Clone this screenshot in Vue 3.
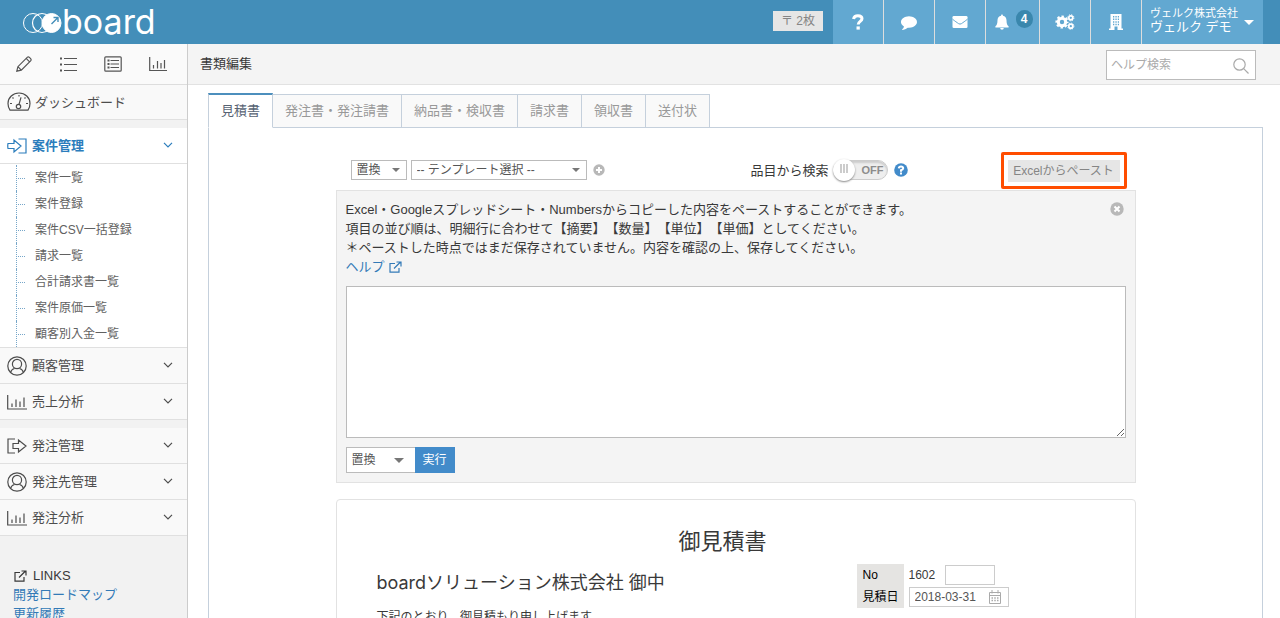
<script setup>
import { ref } from 'vue'

const subItems = ['案件一覧', '案件登録', '案件CSV一括登録', '請求一覧', '合計請求書一覧', '案件原価一覧', '顧客別入金一覧']
const groups = [
  [{ label: '顧客管理', icon: 'user' }, { label: '売上分析', icon: 'chart' }],
  [{ label: '発注管理', icon: 'out' }, { label: '発注先管理', icon: 'user' }, { label: '発注分析', icon: 'chart' }]
]
const tabs = ['見積書', '発注書・発注請書', '納品書・検収書', '請求書', '領収書', '送付状']
const activeTab = ref(0)
const searchItems = ref(false)
const pasted = ref('')
const serial = ref('')
const estimateDate = ref('2018-03-31')
</script>

<template>
  <div class="app">
    <header class="topbar">
      <a href="#" class="brand" aria-label="board">
        <svg width="40" height="26" viewBox="0 0 40 26" fill="none" stroke="#fff" aria-hidden="true">
          <circle cx="11" cy="14" r="9.500" />
          <circle cx="20" cy="14" r="9.500" stroke-width="1.200" />
          <circle cx="29.500" cy="14" r="9.500" fill="#fff" />
          <path d="M29.500 15l6-6M31.500 8.500H36V13" stroke="#438eb9" stroke-width="1.400" />
        </svg>
        <span>board</span>
      </a>
      <span class="stamp">〒 2枚</span>
      <nav class="topnav">
        <button type="button" class="first" aria-label="ヘルプ">
          <svg width="12" height="16" viewBox="0 0 12 16" fill="none" stroke="#fff" stroke-width="3"><path d="M1.500 5C2 2.800 3.700 1.800 5.900 1.800c2.400 0 4.100 1.100 4.100 3 0 2.700-3.800 2.500-3.800 5.700" /><path d="M4.500 14h3.300" stroke-width="3.200" /></svg>
        </button>
        <button type="button" aria-label="コメント">
          <svg width="16" height="16" viewBox="0 0 1792 1792" fill="#fff"><path d="M1792 896q0 174-120 321.500t-326 233-450 85.500q-70 0-145-8-198 175-460 242-49 14-114 22-17 2-30.500-9t-17.500-29q-3-8 6-31l17-25q7-8 31-34.500t34.500-38 31-39.500 32.500-51 27-59 26-76q-157-89-247.500-220t-90.500-281q0-130 71-248.500t191-204.500 286-136.500 348-50.500 348 50.500 286 136.500 191 204.500 71 248.500z" /></svg>
        </button>
        <button type="button" aria-label="メール">
          <svg width="16" height="16" viewBox="0 0 16 16"><rect x="0.500" y="2" width="15" height="12" rx="1.300" fill="#fff" /><path d="M.5 5.200C3 7.200 5 8.500 6.500 9.600q1.500 1 3 0C11 8.500 13 7.200 15.500 5.200" fill="none" stroke="#62a8d1" stroke-width="1" /></svg>
        </button>
        <button type="button" class="bell" aria-label="通知 4">
          <svg width="14" height="16" viewBox="0 0 14 16" fill="#fff"><path d="M7 .5c.6 0 1 .5.900 1.200 2.300.5 3.600 2.300 3.600 4.500 0 3.600.8 5 2.100 6.100v1.200H.4v-1.200C1.700 11.200 2.500 9.800 2.500 6.200c0-2.200 1.300-4 3.600-4.500C6 1 6.400.5 7 .5zM5.200 14h3.600a1.800 1.800 0 0 1-3.600 0z" /></svg>
          <span class="count">4</span>
        </button>
        <button type="button" aria-label="設定">
          <svg width="20" height="16" viewBox="0 0 20 16" fill="none" stroke="#fff"><circle cx="7" cy="8" r="3.700" stroke-width="3" /><circle cx="7" cy="8" r="5.600" stroke-width="2" stroke-dasharray="2.400 2" stroke-dashoffset="1.200" /><circle cx="15.800" cy="3.800" r="2" stroke-width="1.700" /><circle cx="15.800" cy="3.800" r="3.100" stroke-width="1" stroke-dasharray="1.300 1.130" /><circle cx="15.800" cy="12.200" r="2" stroke-width="1.700" /><circle cx="15.800" cy="12.200" r="3.100" stroke-width="1" stroke-dasharray="1.300 1.130" /></svg>
        </button>
        <button type="button" aria-label="会社">
          <svg width="14" height="16" viewBox="0 0 14 16" fill="#fff"><path fill-rule="evenodd" d="M1.500 0h11v14.500H14V16H8.500v-3.500h-3V16H0v-1.500h1.500zM4 2v1.500h1.300V2zm2.400 0v1.500h1.300V2zm2.400 0v1.500H10V2zM4 4.600v1.500h1.300V4.600zm2.400 0v1.500h1.300V4.600zm2.400 0v1.500H10V4.600zM4 7.200v1.500h1.300V7.200zm2.400 0v1.500h1.300V7.200zm2.400 0v1.500H10V7.200zM4 9.800v1.500h1.300V9.800zm2.400 0v1.500h1.300V9.800zm2.400 0v1.500H10V9.800z" /></svg>
        </button>
        <button type="button" class="account">
          <span class="names"><small>ヴェルク株式会社</small><span>ヴェルク デモ</span></span>
          <i class="caret"></i>
        </button>
      </nav>
    </header>

    <div class="body">
      <aside class="sidebar">
        <div class="shortcuts">
          <a href="#" aria-label="作成"><svg width="16" height="16" viewBox="0 0 16 16"><path d="M.8 15.200l1.100-4.500L11.200 1.400q1.100-1 2.200 0l1.200 1.200q1 1.100 0 2.200L5.300 14.100zM1.900 10.700l3.400 3.400M10.200 2.400l3.400 3.400" /></svg></a>
          <a href="#" aria-label="一覧"><svg width="18" height="16" viewBox="0 0 18 16"><path d="M5 2.500h13M5 8.500h13M5 14.500h13" /><path d="M1 2.500h2M1 8.500h2M1 14.500h2" stroke-width="2.200" /></svg></a>
          <a href="#" aria-label="明細"><svg width="18" height="16" viewBox="0 0 18 16"><rect x=".8" y=".8" width="16.400" height="14.400" rx="1" /><path d="M6.500 4.500H15M6.500 8H15M6.500 11.500H15" /><path d="M3.500 4.500h2M3.500 8h2M3.500 11.500h2" stroke-width="2" /></svg></a>
          <a href="#" aria-label="分析"><svg width="18" height="16" viewBox="0 0 18 16"><path d="M.7 1v13.500H18M4.500 9v3.500M8.500 5v7.500M12 7v5.500M15.500 4v8.500" /></svg></a>
        </div>
        <a href="#" class="menu dashboard">
          <svg width="24" height="20" viewBox="0 0 24 20"><path d="M3 18.200h18q2-3 2-6.700C23 5.500 18 1 12 1S1 5.500 1 11.500q0 3.700 2 6.700z" /><circle cx="11.500" cy="14.500" r="2.200" /><path d="M12 12.300l2-7M12 3v1.500M5.500 5.500l1 1M3 11.500h2M18.500 5.500l-1 1M21 11.500h-2" /></svg>
          <span>ダッシュボード</span>
        </a>
        <section class="group">
          <a href="#" class="menu open">
            <svg width="20" height="18" viewBox="0 0 20 18"><path d="M11.500 2H19v14h-7.500M1 6.500h6V3l7 6-7 6v-3.500H1q-.5-2.500 0-5z" /></svg>
            <span>案件管理</span>
            <svg class="chevron" width="10" height="6" viewBox="0 0 10 6"><path d="M1 .8l4 4 4-4" /></svg>
          </a>
          <ul class="submenu">
            <li v-for="item in subItems" :key="item"><a href="#">{{ item }}</a></li>
          </ul>
        </section>
        <section v-for="(group, index) in groups" :key="index" class="group" :class="{ joined: index === 0 }">
          <a v-for="item in group" :key="item.label" href="#" class="menu">
            <svg v-if="item.icon === 'user'" width="20" height="20" viewBox="0 0 20 20"><circle cx="10" cy="10" r="9.200" /><circle cx="10" cy="8" r="4.600" /><path d="M3.500 16.500q1-3.300 4-4M16.500 16.500q-1-3.300-4-4" /></svg>
            <svg v-else-if="item.icon === 'chart'" width="20" height="18" viewBox="0 0 20 18"><path d="M.7 2v14H20M5 10.500V14M9 6.500V14M13 8.500V14M17 4.500V14" /></svg>
            <svg v-else width="20" height="18" viewBox="0 0 20 18"><path d="M8 2H1v14h7M6 6.500h5.500V3l7.500 6-7.500 6v-3.500H6z" /></svg>
            <span>{{ item.label }}</span>
            <svg class="chevron" width="10" height="6" viewBox="0 0 10 6"><path d="M1 .8l4 4 4-4" /></svg>
          </a>
        </section>
        <div class="links">
          <h2><svg width="13" height="12" viewBox="0 0 13 12"><path d="M6 2.500H1v8.700h9V7M5 7.500L11.500 1M7.500 1h4.500v4.500" /></svg>LINKS</h2>
          <a href="#">開発ロードマップ</a>
          <a href="#">更新履歴</a>
        </div>
      </aside>

      <main class="main">
        <div class="titlebar">
          <h1>書類編集</h1>
          <form class="search" role="search" @submit.prevent>
            <input type="search" placeholder="ヘルプ検索" aria-label="ヘルプ検索" />
            <svg width="16" height="16" viewBox="0 0 16 16"><circle cx="6.500" cy="6.500" r="5.700" /><path d="M10.700 10.700L15.500 15.500" /></svg>
          </form>
        </div>

        <div class="tabs" role="tablist">
          <button v-for="(tab, i) in tabs" :key="tab" type="button" role="tab" :aria-selected="activeTab === i" :class="{ active: activeTab === i }" @click="activeTab = i">{{ tab }}</button>
        </div>

        <div class="content">
          <div class="sheet">
            <div class="toolbar">
              <span class="select mode"><select aria-label="反映方法"><option>置換</option></select></span>
              <span class="select template"><select aria-label="テンプレート"><option>-- テンプレート選択 --</option></select></span>
              <button type="button" class="round add" aria-label="追加"><svg width="12" height="12" viewBox="0 0 12 12"><circle cx="6" cy="6" r="5.700" /><path d="M6 3v6M3 6h6" /></svg></button>
              <label class="toggle">
                <span>品目から検索</span>
                <span class="switch"><input v-model="searchItems" type="checkbox" /><b>{{ searchItems ? 'ON' : 'OFF' }}</b><i></i></span>
              </label>
              <button type="button" class="round help" aria-label="品目検索のヘルプ"><svg width="14" height="14" viewBox="0 0 14 14"><circle cx="7" cy="7" r="6.800" /><path d="M4.800 5.300Q5 3.500 7 3.500t2.200 1.700Q9.200 6.600 7 7.300v1.400M6 10.500h2" /></svg></button>
              <div class="focus-frame"><button type="button" class="excel">Excelからペースト</button></div>
            </div>

            <section class="panel">
              <button type="button" class="round close" aria-label="閉じる"><svg width="14" height="14" viewBox="0 0 14 14"><circle cx="7" cy="7" r="6.700" /><path d="M4.500 4.500l5 5M9.500 4.500l-5 5" /></svg></button>
              <p>Excel・Googleスプレッドシート・Numbersからコピーした内容をペーストすることができます。</p>
              <p>項目の並び順は、明細行に合わせて【摘要】【数量】【単位】【単価】としてください。</p>
              <p>＊ペーストした時点ではまだ保存されていません。内容を確認の上、保存してください。</p>
              <p><a href="#">ヘルプ<svg width="13" height="12" viewBox="0 0 13 12"><path d="M6 2.500H1v8.700h9V7M5 7.500L11.500 1M7.500 1h4.500v4.500" /></svg></a></p>
              <textarea v-model="pasted" aria-label="ペースト内容"></textarea>
              <div class="run">
                <span class="select"><select aria-label="ペースト方法"><option>置換</option></select></span>
                <button type="button">実行</button>
              </div>
            </section>

            <section class="estimate">
              <h2>御見積書</h2>
              <div class="estimate-head">
                <div>
                  <h3>boardソリューション株式会社 御中</h3>
                  <p>下記のとおり、御見積もり申し上げます。</p>
                </div>
                <table>
                  <tbody>
                    <tr><th scope="row"><label for="serial">No</label></th><td><div class="cell"><span>1602</span><input id="serial" v-model="serial" type="text" class="serial" /></div></td></tr>
                    <tr><th scope="row"><label for="date">見積日</label></th><td><div class="cell date"><input id="date" v-model="estimateDate" type="text" /><svg width="12" height="14" viewBox="0 0 12 14"><path d="M.5 2.500h11v11H.5zM.5 5.500h11M3 0v3.500M9 0v3.500" /><path d="M2.500 8h7M2.500 10.500h7" stroke-width="1.500" stroke-dasharray="1.500 1.250" /></svg></div></td></tr>
                  </tbody>
                </table>
              </div>
            </section>
          </div>
        </div>
      </main>
    </div>
  </div>
</template>

<style>
body { margin: 0; background: #fff; }
</style>

<style scoped>
* { box-sizing: border-box; }
.app { display: flex; flex-direction: column; height: 100vh; overflow: hidden; color: #393939; font: 13px/19px "Liberation Sans", "Noto Sans CJK JP", sans-serif; text-spacing-trim: space-all; }
button, input, select, textarea { margin: 0; font: inherit; }
button { padding: 0; border: 0; cursor: pointer; }
h1, h2, h3, p, ul { margin: 0; padding: 0; font-weight: normal; }
a { color: #337ab7; text-decoration: none; }
svg { flex: none; display: block; }

.topbar { display: flex; flex: none; align-items: center; height: 44px; padding-right: 17px; background: #438eb9; }
.brand { display: flex; align-items: center; margin-right: auto; padding-left: 22px; color: #fff; }
.brand span { font: 400 34px/42px Inter, sans-serif; }
.stamp { margin: 0 10px 2px 0; padding: 0 8px; background: #e6e6e6; color: #858585; font-size: 12px; line-height: 20px; }
.topnav { display: flex; align-self: stretch; }
.topnav button { display: flex; align-items: center; justify-content: center; width: 51px; border-left: 1px solid #ddd; background: #62a8d1; color: #fff; }
.topnav .first { width: 50px; border-left: 0; }
.topnav .bell { width: 54px; gap: 7px; padding-left: 2px; }
.count { width: 17px; margin-bottom: 6px; border-radius: 9px; background: #3a87ad; font-size: 12px; line-height: 18px; font-weight: bold; }
.topnav .account { justify-content: flex-start; width: 122px; padding-left: 8px; gap: 6px; text-align: left; }
.names { display: flex; flex-direction: column; white-space: nowrap; line-height: 14px; padding-bottom: 4px; }
.names small { font-size: 11px; line-height: 14px; }
.caret { border: 5px solid transparent; border-top-color: #fff; border-bottom: 0; }

.body { display: flex; flex: 1; min-height: 0; }
.sidebar { flex: none; width: 188px; border-right: 1px solid #ccc; background: #f2f2f2; overflow: hidden; }
.sidebar svg, .search svg, .panel p svg, .date svg { fill: none; stroke: currentColor; stroke-width: 1.200; }
.shortcuts { display: flex; height: 41px; align-items: center; padding-left: 16px; gap: 27px; border-bottom: 1px solid #ddd; background: #fafafa; }
.shortcuts a { color: #555; }
.menu { display: flex; align-items: center; gap: 5px; height: 36px; padding: 0 14px 0 7px; border-bottom: 1px solid #e0e0e0; background: #f9f9f9; color: #4d4d4d; }
.menu.dashboard { height: 35px; gap: 4px; }
.menu.open { background: #fff; color: #2b7dbc; font-weight: bold; }
.chevron { margin-left: auto; margin-bottom: 1px; }
.group { margin-top: 8px; }
.group.joined { margin-top: 0; }
.submenu { padding-top: 1px; border-bottom: 1px solid #e0e0e0; background: #fff; list-style: none; }
.submenu li { display: flex; align-items: center; height: 26px; margin-left: 16px; border-left: 1px dotted #76a6c9; }
.submenu li::before { content: ""; width: 7px; margin-left: 1px; border-top: 1px dotted #76a6c9; }
.submenu a { padding-left: 10px; color: #616161; font-size: 12px; }
.links { display: flex; flex-direction: column; padding: 30px 13px; }
.links h2 { display: flex; align-items: center; gap: 6px; padding-left: 1px; font-size: 13px; line-height: 19px; }

.main { display: flex; flex: 1; flex-direction: column; min-width: 0; overflow: hidden; }
.titlebar { display: flex; flex: none; align-items: center; justify-content: space-between; height: 41px; padding: 0 24px 0 12px; border-bottom: 1px solid #e2e2e2; background: #f4f4f4; }
.titlebar h1 { padding-bottom: 2px; font-size: 13px; }
.search { position: relative; margin-top: 1px; }
.search input { display: block; width: 150px; height: 30px; padding: 0 28px 0 4px; border: 1px solid #bbb; border-radius: 0; background: #fff; font-size: 12px; appearance: none; outline: 0; }
.search input::placeholder { color: #aaa; }
.search svg { position: absolute; right: 7px; top: 8px; color: #aaa; }

.tabs { display: flex; flex: none; align-items: flex-end; padding: 8px 20px 0; position: relative; z-index: 1; margin-bottom: -1px; }
.tabs button { height: 34px; padding: 0 12px; border: 1px solid #c5d0dc; border-left-width: 0; background: #f9f9f9; color: #999; line-height: 32px; }
.tabs .active { height: 35px; border-top: 2px solid #4c8fbd; border-bottom-color: #fff; background: #fff; color: #576373; }
.tabs button:first-child { border-left-width: 1px; }
.content { flex: 1 0 auto; margin: 0 17px 0 20px; padding-top: 24px; border: 1px solid #c5d0dc; border-bottom: 0; }
.sheet { max-width: 800px; margin: 0 auto; }
.toolbar { display: flex; align-items: center; height: 36px; padding: 0 9px 0 15px; margin-bottom: 2px; }
.select { position: relative; display: block; }
.select::after { content: ""; position: absolute; right: 7px; top: 50%; margin-top: -2px; border: 4px solid transparent; border-top-color: #777; border-bottom: 0; pointer-events: none; }
.select select { display: block; width: 100%; height: 20px; padding: 0 5px; border: 1px solid #bbb; border-radius: 0; background: #fff; color: #555; font-size: 12px; line-height: 18px; appearance: none; }
.mode { width: 56px; margin-right: 4px; }
.template { width: 176px; margin-right: 6px; }
.round { background: none; }
.round circle { fill: #b8b8b8; }
.round path { fill: none; stroke: #fff; stroke-width: 2; }
.help circle { fill: #428bca; }
.toggle { display: flex; align-items: center; gap: 4px; margin-left: auto; }
.switch { position: relative; display: block; width: 55px; height: 20px; }
.switch input { display: block; width: 55px; height: 20px; border: 1px solid #ccc; border-radius: 10px; background: #eee; box-shadow: inset 0 2px 2px #ccc; appearance: none; }
.switch b { position: absolute; right: 4px; top: 0; color: #8c8c8c; font-size: 11px; line-height: 20px; }
.switch i { position: absolute; left: 0; top: -1px; width: 22px; height: 22px; border-radius: 50%; background: linear-gradient(90deg, #ccc 0 2px, #fff 2px 3px, #ccc 3px 5px, #fff 5px 6px, #ccc 6px 8px) 7px 5px / 8px 9px no-repeat #fff; box-shadow: 0 1px 2px #888; }
.help { margin-left: 6px; }
.focus-frame { align-self: flex-start; margin-left: 93px; padding: 5px 4px 4px; border: 3px solid #ff4d00; border-radius: 2px; }
.excel { display: block; width: 112px; height: 22px; background: #e6e6e6; color: #858585; font-size: 12px; }

.panel { position: relative; padding: 9px; border: 1px solid #e2e2e2; background: #f4f4f4; }
.panel .close { position: absolute; right: 11px; top: 11px; }
.panel p a { display: inline-flex; align-items: center; gap: 4px; }
.panel textarea { display: block; width: 100%; height: 152px; margin-top: 10px; border: 1px solid #bbb; background: #fff; resize: both; outline: 0; }
.run { display: flex; margin-top: 9px; }
.run .select { width: 69px; }
.run .select::after { right: 11px; border-width: 5px 5px 0; }
.run select { height: 26px; border-right: 0; }
.run button { width: 40px; height: 26px; background: #428bca; color: #fff; font-size: 12px; }
.estimate { margin-top: 16px; padding: 26px 40px 40px; border: 1px solid #e2e2e2; border-radius: 4px; }
.estimate h2 { padding-right: 26px; font-size: 22px; line-height: 32px; text-align: center; }
.estimate-head { display: flex; justify-content: space-between; margin-top: 6px; padding-right: 86px; }
.estimate h3 { padding-top: 4px; font-family: Inter, "Noto Sans CJK JP", sans-serif; font-size: 18px; line-height: 30px; }
.estimate p { margin-top: 9px; font-size: 12px; line-height: 20px; }
table { align-self: flex-start; border-collapse: collapse; font-size: 12px; }
th, td { height: 22px; padding: 0 5px; font-weight: normal; text-align: left; }
th { background: #e5e4e2; color: #000; }
td { padding-right: 0; }
.cell { position: relative; display: flex; align-items: center; gap: 10px; width: 100px; }
.cell input { height: 20px; padding: 0 5px; border: 1px solid #ccc; background: #fff; color: #555; outline: 0; }
.serial { width: 50px; }
.date input { width: 100%; }
.date svg { position: absolute; right: 8px; top: 3px; color: #aaa; stroke-width: 1; }
</style>
